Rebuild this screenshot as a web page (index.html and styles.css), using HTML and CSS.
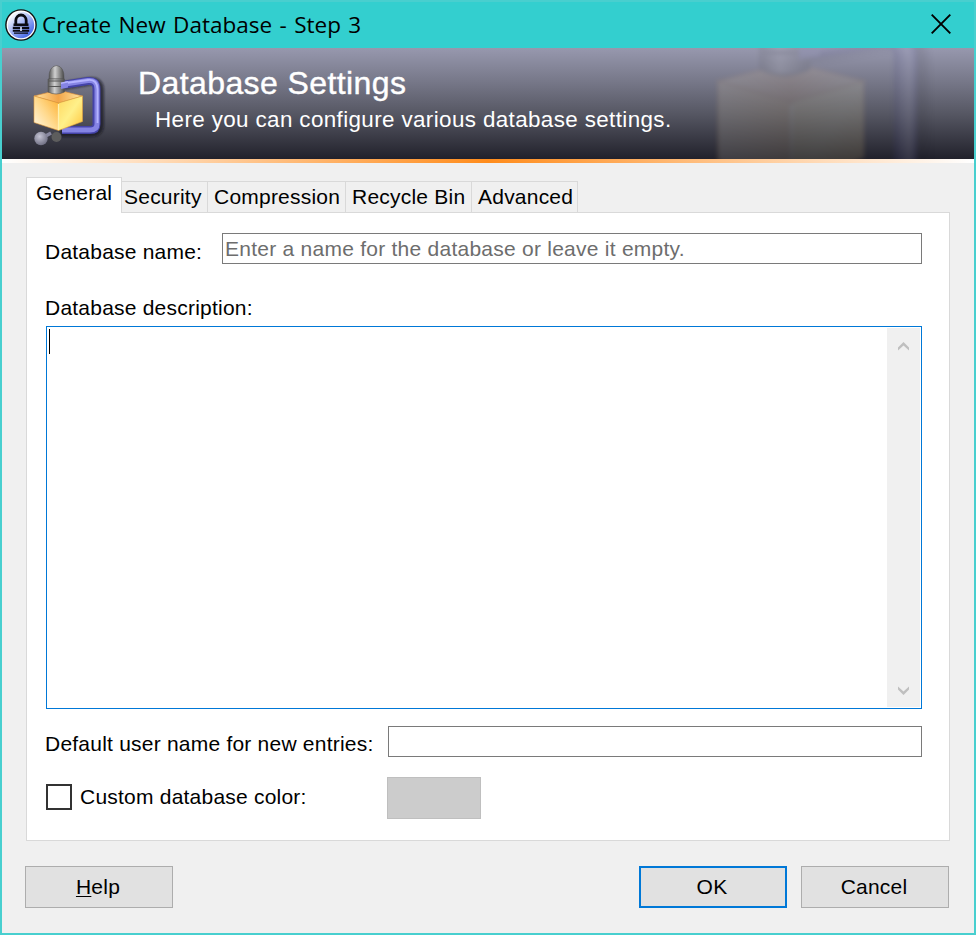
FILE: index.html
```html
<!DOCTYPE html>
<html lang="en">
<head>
<meta charset="utf-8">
<title>Create New Database - Step 3</title>
<link rel="stylesheet" href="styles.css">
</head>
<body>
<main class="window">
  <header class="titlebar">
    <svg class="app-icon" viewBox="0 0 32 32">
      <defs><linearGradient id="lockbg" x1="0.15" y1="0.1" x2="0.8" y2="0.9"><stop offset="0" stop-color="#fff"/><stop offset="1" stop-color="#4668e8"/></linearGradient></defs>
      <circle cx="16" cy="16" r="15.800" fill="#111"/>
      <circle cx="16" cy="16" r="14.400" fill="#fff"/>
      <circle cx="16" cy="16" r="13.200" fill="url(#lockbg)"/>
      <path d="M10.800 15V11.500a5.200 5.500 0 0 1 10.400 0V15" fill="none" stroke="#0a0a12" stroke-width="2.800"/>
      <path d="M8.500 14.500h15v2.500h-15zM7.800 17.700h16.400v2.300H7.800zM7.800 20.800h16.400v2H7.800zM9 23.500h14v1.300H9z" fill="#0a0a12"/>
      <path d="M15.200 18h1.600v4h-1.600z" fill="#dfe6ff"/>
    </svg>
    <h1 class="caption">Create New Database - Step 3</h1>
    <svg class="close" viewBox="0 0 20 20"><path d="M.7 .7l18.600 18.600M19.300 .7L.7 19.300" stroke="#000" stroke-width="1.900"/></svg>
  </header>

  <section class="banner">
    <svg class="banner-icon" viewBox="30 14 76 86">
      <defs>
        <linearGradient id="left" x1="0" y1="1" x2="1" y2="0"><stop offset="0" stop-color="#fff8e6"/><stop offset=".5" stop-color="#ffd98c"/><stop offset="1" stop-color="#fdae2c"/></linearGradient>
        <linearGradient id="right" x1="0" y1="0" x2="1" y2="1"><stop offset="0" stop-color="#ffd75f"/><stop offset=".5" stop-color="#fff08a"/><stop offset="1" stop-color="#ffc43a"/></linearGradient>
        <linearGradient id="top" x1="0" y1="0" x2="1" y2="0"><stop offset="0" stop-color="#ffe3a3"/><stop offset=".5" stop-color="#f3a548"/><stop offset="1" stop-color="#ffe9a6"/></linearGradient>
        <linearGradient id="metal" x1="0" y1="0" x2="1" y2="0"><stop offset="0" stop-color="#555"/><stop offset=".4" stop-color="#d0d0d0"/><stop offset="1" stop-color="#484848"/></linearGradient>
        <radialGradient id="ball" cx=".4" cy=".35" r=".7"><stop offset="0" stop-color="#c4c4d4"/><stop offset="1" stop-color="#6c6c80"/></radialGradient>
        <filter id="soft" x="-20%" y="-20%" width="140%" height="140%"><feGaussianBlur stdDeviation="1.3"/></filter>
      </defs>
      <g id="press">
        <path d="M62 38L89 33.500Q100 32 100 42V76Q100 85 90 85H60" fill="none" stroke="#15151f" stroke-opacity=".65" stroke-width="8" filter="url(#soft)"/>
        <path d="M62 37L88 33Q96.500 32 96.500 41V76Q96.500 82 90 82H62" fill="none" stroke="#4443a8" stroke-width="8"/>
        <path d="M62 36.500L88 32.500Q97 31.500 97 41V76Q97 82 90 82H62" fill="none" stroke="#8584e4" stroke-width="5"/>
        <path d="M62 35.500L88 32Q97 31 97.500 41V75" fill="none" stroke="#b4b3ff" stroke-width="1.800"/>
        <path d="M51 85L42 90" stroke="#8888a0" stroke-width="3.500"/>
        <circle cx="56.500" cy="89" r="5" fill="#5d5d5d"/>
        <circle cx="41" cy="90.500" r="6.700" fill="url(#ball)"/>
        <path d="M34 48L58 42L82.500 48L58.500 55Z" fill="url(#top)" stroke="#d98a36" stroke-width=".6"/>
        <path d="M34 48L58.500 55V82.500L34 74.500Z" fill="url(#left)" stroke="#e39a3a" stroke-width=".6"/>
        <path d="M82.500 48L58.500 55V82.500L82.500 73.500Z" fill="url(#right)" stroke="#e3a240" stroke-width=".6"/>
        <path d="M58.500 56V82" stroke="#fff0ae" stroke-width="1.300"/>
        <path d="M49 31Q48.500 18.500 56.500 17.500Q64.500 18.500 64 31Z" fill="url(#metal)" stroke="#555" stroke-width=".6"/>
        <path d="M48 31H64.500V44Q56 48 48 44Z" fill="url(#metal)" stroke="#555" stroke-width=".6"/>
        <path d="M48.500 33H64M48 38.500H64" stroke="#555" stroke-width="1"/>
        <path d="M61 35L68 33.500V39.500L61 41Z" fill="#8584e4"/>
        <path d="M61 35.200L68 33.800" stroke="#b4b3ff" stroke-width="1.500"/>
      </g>
    </svg>
    <div class="banner-text">
      <h2>Database Settings</h2>
      <p>Here you can configure various database settings.</p>
    </div>
    <svg class="ghost" viewBox="30 14 76 86"><use href="#press"/></svg>
  </section>
  <div class="strip"></div>

  <section class="content">
    <nav class="tabs">
      <span class="tab active">General</span><span class="tab t-sec">Security</span><span class="tab t-comp">Compression</span><span class="tab t-bin">Recycle Bin</span><span class="tab t-adv">Advanced</span>
    </nav>
    <div class="panel">
      <div class="row name-row"><span class="label">Database name:</span><div class="field name-field">Enter a name for the database or leave it empty.</div></div>
      <div class="label desc-label">Database description:</div>
      <div class="memo">
        <div class="caret"></div>
        <div class="scrollbar">
          <svg viewBox="0 0 11 9"><path d="M0 8.500V5.500L5.500 0L11 5.500V8.500L5.500 3.500Z" fill="#bfbfbf"/></svg>
          <svg viewBox="0 0 11 9"><path d="M0 .5V3.500L5.500 9L11 3.500V.5L5.500 5.500Z" fill="#bfbfbf"/></svg>
        </div>
      </div>
      <div class="row user-row"><span class="label">Default user name for new entries:</span><div class="field user-field"></div></div>
      <div class="row color-row"><span class="check"></span><span class="label">Custom database color:</span><span class="swatch"></span></div>
    </div>
    <footer class="buttons">
      <div class="button"><span><u>H</u>elp</span></div>
      <div class="button ok">OK</div>
      <div class="button">Cancel</div>
    </footer>
  </section>
</main>
</body>
</html>
```
FILE: styles.css
```css
* { box-sizing: border-box; }
body {
  margin: 0;
  font: 21px/24px "Liberation Sans", Arial, sans-serif;
  letter-spacing: .22px;
  color: #000;
}
.window {
  width: 976px;
  height: 935px;
  border: 2px solid #48cfcf;
  background: #f0f0f0;
  display: flex;
  flex-direction: column;
  overflow: hidden;
}
.titlebar {
  height: 46px;
  background: #33cfcf;
  display: flex;
  align-items: center;
  padding: 0 23px 0 3px;
  flex: none;
}
.app-icon { width: 32px; height: 32px; margin-top: -1px; }
.caption {
  margin: -1px auto 0 5px;
  font: 22.5px/30px "Open Sans", "Noto Sans", sans-serif;
  letter-spacing: 0;
  word-spacing: 1.6px;
  white-space: nowrap;
}
.close { width: 20px; height: 20px; margin-top: -2px; }
.banner {
  position: relative;
  height: 111px;
  flex: none;
  display: flex;
  overflow: hidden;
  color: #fff;
  background: linear-gradient(#9798ae 0%, #777889 30%, #555662 60%, #21212b 100%);
}
.banner-icon { width: 76px; height: 86px; margin: 14px 0 0 28px; flex: none; }
.banner-text { margin: 17px 0 0 32px; white-space: nowrap; }
.banner h2 { margin: 0; font-size: 32px; line-height: 36px; font-weight: normal; letter-spacing: .4px; -webkit-text-stroke: .4px #fff; }
.banner p { margin: 6px 0 0 17px; font-size: 22.4px; line-height: 26px; letter-spacing: .38px; }
.ghost { position: absolute; left: 704px; top: -69px; width: 228px; height: 258px; opacity: .14; filter: blur(2px) saturate(.6); }
.strip { height: 4px; flex: none; background: linear-gradient(90deg, #fff, #ff8c1c 50%, #fff); }
.content { padding: 14px 25px 0 23px; flex: 1; }
.tabs { display: flex; align-items: flex-end; height: 36px; margin-left: 1px; position: relative; z-index: 1; }
.tab {
  height: 32px;
  border: 1px solid #d9d9d9;
  border-left: 0;
  line-height: 29px;
  padding-left: 6px;
  white-space: nowrap;
}
.tab.active { width: 96px; height: 36px; border-left: 1px solid #d9d9d9; border-bottom: 0; background: #fff; line-height: 29px; padding-left: 9px; }
.t-sec { width: 86px; padding-left: 2px; }
.t-comp { width: 138px; }
.t-bin { width: 126px; }
.t-adv { width: 106px; }
.panel { margin: -1px -1px 0 1px; height: 629px; border: 1px solid #d9d9d9; background: #fff; padding: 20px 27px 0 19px; }
.row { display: flex; }
.label { white-space: nowrap; margin-left: -1px; }
.name-row .label { margin-top: 7px; }
.field { height: 31px; border: 1px solid #7a7a7a; }
.name-field { margin-left: auto; width: 700px; padding-left: 2px; line-height: 30px; color: #6d6d6d; letter-spacing: .25px; }
.desc-label { margin-top: 32px; }
.memo { margin-top: 6px; height: 383px; border: 1px solid #0078d7; display: flex; justify-content: space-between; padding: 1px; }
.caret { width: 1px; height: 25px; margin: 1px 0 0 1px; background: #000; }
.scrollbar { width: 33px; background: #f0f0f0; display: flex; flex-direction: column; align-items: center; justify-content: space-between; padding: 14px 0 12px; }
.scrollbar svg { width: 11px; height: 9px; }
.user-row { margin-top: 17px; }
.user-row .label { margin-top: 6px; }
.user-field { margin-left: auto; width: 534px; }
.color-row { margin-top: 20px; }
.check { width: 26px; height: 26px; border: 2px solid #333; margin-top: 7px; }
.color-row .label { margin: 8px 0 0 8px; }
.swatch { width: 94px; height: 42px; margin: 0 441px 0 auto; background: #ccc; border: 1px solid #bfbfbf; }
.buttons { display: flex; gap: 14px; margin-top: 25px; }
.button { width: 148px; height: 42px; border: 1px solid #adadad; background: #e1e1e1; display: flex; align-items: center; justify-content: center; padding-right: 2px; }
.button:first-child { margin-right: auto; }
.button.ok { border: 2px solid #0078d7; }
u { text-decoration-thickness: 1px; text-underline-offset: 2px; }
```
